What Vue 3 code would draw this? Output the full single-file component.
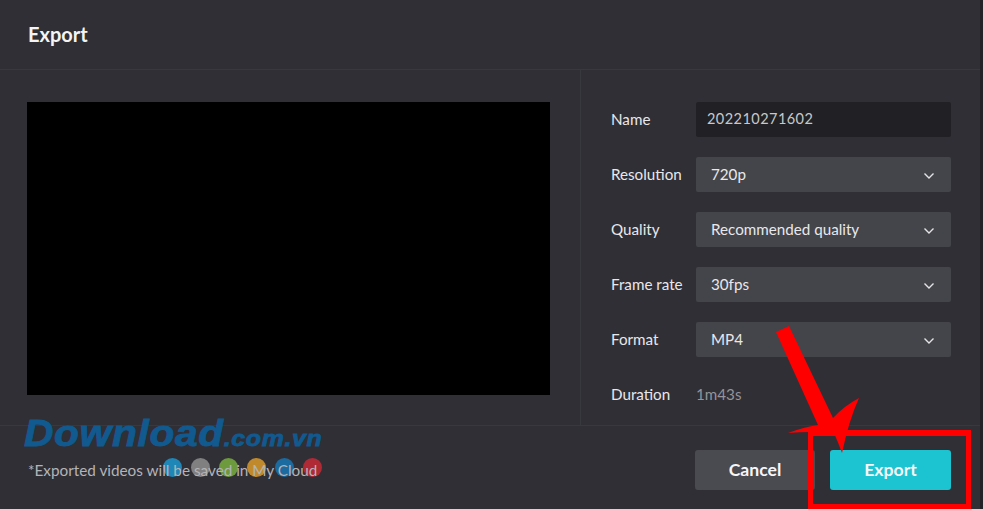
<script setup>
const selects = [
	{ label: "Resolution", value: "720p" },
	{ label: "Quality", value: "Recommended quality" },
	{ label: "Frame rate", value: "30fps" },
	{ label: "Format", value: "MP4" },
];

const dots = ["#1f86b8", "#808080", "#6c9a3c", "#c08a2c", "#1b6aa0", "#b02a35"];
</script>

<template>
	<div class="page">
		<div class="dialog">
			<header class="head">Export</header>

			<div class="body">
				<div class="preview-col">
					<div class="preview"></div>
				</div>

				<div class="form">
					<div class="row">
						<span class="label">Name</span>
						<div class="field name">202210271602</div>
					</div>
					<div v-for="item in selects" :key="item.label" class="row">
						<span class="label">{{ item.label }}</span>
						<div class="field select">
							<span class="value">{{ item.value }}</span>
							<svg class="chev" width="12" height="8" viewBox="0 0 12 8">
								<path d="M1.5 1.5 6 6l4.5-4.5" fill="none" stroke="#e4e4e6" stroke-width="1.4" />
							</svg>
						</div>
					</div>
					<div class="row">
						<span class="label">Duration</span>
						<span class="value time">1m43s</span>
					</div>
				</div>
			</div>

			<footer class="foot">
				<!-- watermark dots sit under the note text -->
				<div class="dots">
					<i v-for="c in dots" :key="c" :style="{ backgroundColor: c }"></i>
				</div>
				<span class="note">*Exported videos will be saved in My Cloud</span>
				<div class="actions">
					<button class="btn cancel">Cancel</button>
					<button class="btn export">Export</button>
				</div>
			</footer>
		</div>

		<div class="mark"><span class="big">Download</span><span class="small">.com.vn</span></div>

		<!-- red annotation on top -->
		<div class="red-box"></div>
		<svg class="arrow" width="983" height="509" viewBox="0 0 983 509">
			<path d="M776 332 789 326 833 418Q844 406 859 398 849 420 842 453 838 442 834 433 810 431 788 433 804 427 818 425Z" fill="#fe0000" />
		</svg>
	</div>
</template>

<style>
	html,
	body {
		margin: 0;
		background: #26262b;
	}
</style>

<style scoped>
	.page {
		position: relative;
		width: 983px;
		height: 509px;
		overflow: hidden;
		background: #232327;
		font-family: Lato, "Noto Sans", sans-serif;
		font-size: 15.2px;
		color: #e6e6e8;
	}

	.dialog {
		width: 980px;
		height: 509px;
		background: #302f36;
		display: flex;
		flex-direction: column;
	}

	.head {
		height: 70px;
		box-sizing: border-box;
		padding: 0 28px;
		line-height: 68px;
		font-size: 20px;
		font-weight: 700;
		color: #f4f4f5;
		border-bottom: 1px solid #38383f;
	}

	.body {
		height: 356px;
		display: flex;
		border-bottom: 1px solid #38383f;
		box-sizing: border-box;
	}

	.preview-col {
		width: 581px;
		box-sizing: border-box;
		padding: 32px 0 0 27px;
		border-right: 1px solid #38383f;
	}

	.preview {
		width: 523px;
		height: 293px;
		background: #000;
	}

	.form {
		flex: 1;
		padding: 32px 29px 0 30px;
		display: flex;
		flex-direction: column;
		gap: 20px;
	}

	.row {
		display: flex;
		align-items: center;
		height: 35px;
	}

	.label {
		width: 85px;
		margin-bottom: 2px;
		color: #e8e8ea;
	}

	.value {
		margin-bottom: 2px;
	}

	.field {
		width: 255px;
		height: 35px;
		box-sizing: border-box;
		border-radius: 2px;
		display: flex;
		align-items: center;
	}

	.name {
		background: #212125;
		padding: 0 0 2px 11px;
		font-size: 14.5px;
		color: #c8c8ca;
		letter-spacing: 0.45px;
	}

	.select {
		background: #44444b;
		padding: 0 16px 0 15px;
		justify-content: space-between;
		color: #e8e8ea;
	}

	.chev {
		margin-top: 2px;
	}

	.time {
		color: #94949a;
	}

	.foot {
		flex: 1;
		display: flex;
		align-items: center;
		justify-content: space-between;
		padding: 0 29px 0 28px;
	}

	.note {
		position: relative;
		z-index: 1;
		font-size: 15.3px;
		color: #b4b4b6;
		margin-top: 4px;
	}

	.actions {
		display: flex;
		gap: 15px;
		margin-top: 4px;
	}

	.btn {
		width: 120px;
		height: 40px;
		border: 0;
		border-radius: 3px;
		font-family: inherit;
		font-size: 17.6px;
		font-weight: 700;
		color: #f6f6f6;
	}

	.cancel {
		background: #4a4a51;
	}

	.export {
		width: 121px;
		background: #1cc3d1;
	}

	.mark {
		position: absolute;
		left: 24px;
		top: 414px;
		color: #115a90;
		font-family: "Liberation Sans", sans-serif;
		font-style: italic;
		font-weight: 700;
		white-space: nowrap;
		line-height: 40px;
		transform: scaleX(1.13);
		transform-origin: left center;
		-webkit-text-stroke: 0.8px #115a90;
	}

	.big {
		font-size: 36px;
		letter-spacing: 0.6px;
	}

	.small {
		font-size: 22px;
		letter-spacing: 0.6px;
	}

	.dots {
		position: absolute;
		left: 163px;
		top: 458px;
		display: flex;
		gap: 9px;
	}

	.dots i {
		display: block;
		width: 19px;
		height: 19px;
		border-radius: 50%;
	}

	.red-box {
		position: absolute;
		left: 808px;
		top: 430px;
		width: 163px;
		height: 79px;
		box-sizing: border-box;
		border: 5px solid #fe0000;
		border-top-width: 6px;
	}

	.arrow {
		position: absolute;
		left: 0;
		top: 0;
		pointer-events: none;
	}
</style>
